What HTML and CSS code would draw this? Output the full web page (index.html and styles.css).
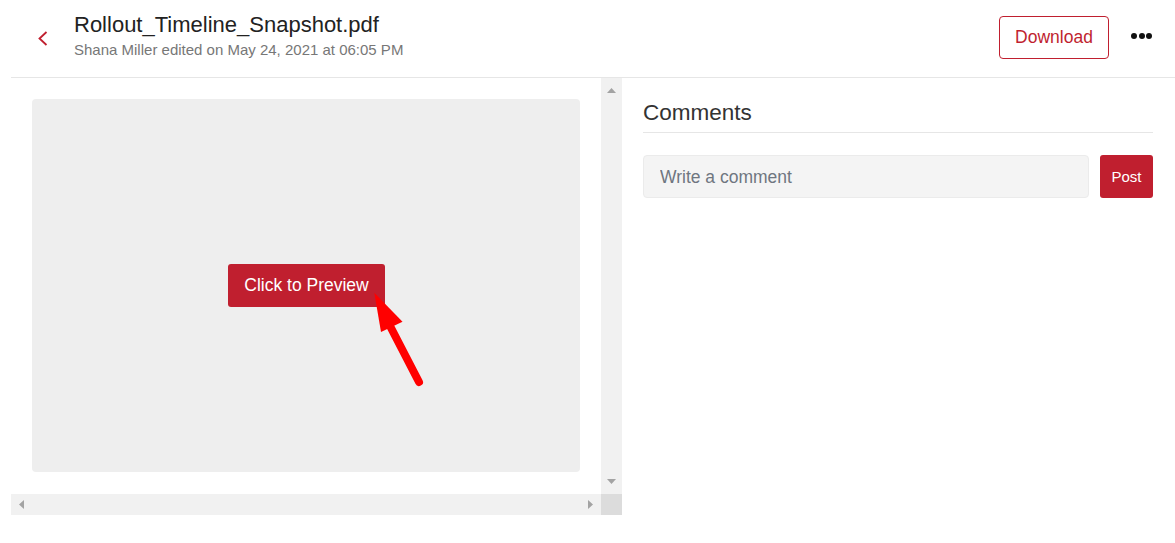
FILE: index.html
```html
<!DOCTYPE html>
<html lang="en">
<head>
<meta charset="utf-8">
<title>Rollout_Timeline_Snapshot.pdf</title>
<link rel="stylesheet" href="styles.css">
</head>
<body>
<header class="topbar">
  <a class="back" href="#" aria-label="Back">
    <svg width="10" height="15" viewBox="0 0 10 15"><path d="M8.5 1 L1.5 7.5 L8.5 14" fill="none" stroke="#c01f2f" stroke-width="1.8"/></svg>
  </a>
  <div class="file-info">
    <h1 class="file-title">Rollout_Timeline_Snapshot.pdf</h1>
    <div class="file-meta">Shana Miller edited on May 24, 2021 at 06:05 PM</div>
  </div>
  <div class="actions">
    <button class="btn-outline">Download</button>
    <button class="more" aria-label="More"><span></span><span></span><span></span></button>
  </div>
</header>
<main class="content">
  <section class="viewer">
    <div class="viewport">
      <div class="preview">
        <button class="btn-primary btn-preview">Click to Preview</button>
        <svg class="pointer" viewBox="0 0 548 373" width="548" height="373">
          <line x1="357" y1="225" x2="387" y2="283" stroke="#ff0000" stroke-width="8" stroke-linecap="round"/>
          <polygon points="342.3,193.7 370.5,222.7 349,233" fill="#ff0000"/>
        </svg>
      </div>
    </div>
    <div class="vscroll">
      <svg width="9" height="5" viewBox="0 0 9 5"><polygon points="4.5,0 9,5 0,5" fill="#a3a3a3"/></svg>
      <svg width="9" height="5" viewBox="0 0 9 5"><polygon points="0,0 9,0 4.5,5" fill="#a3a3a3"/></svg>
    </div>
    <div class="hscroll">
      <svg width="5" height="9" viewBox="0 0 5 9"><polygon points="5,0 5,9 0,4.5" fill="#a3a3a3"/></svg>
      <svg width="5" height="9" viewBox="0 0 5 9"><polygon points="0,0 5,4.5 0,9" fill="#a3a3a3"/></svg>
    </div>
    <div class="corner"></div>
  </section>
  <aside class="comments">
    <h2 class="comments-title">Comments</h2>
    <form class="comment-form">
      <input class="comment-input" type="text" placeholder="Write a comment">
      <button class="btn-primary btn-post" type="button">Post</button>
    </form>
  </aside>
</main>
</body>
</html>
```

FILE: styles.css
```css
* { box-sizing: border-box; }
html, body { margin: 0; padding: 0; background: #ffffff; }
body {
  font-family: "Liberation Sans", Arial, sans-serif;
  color: #222222;
  width: 1175px;
  height: 543px;
  overflow: hidden;
}
button { font-family: inherit; cursor: pointer; }

.topbar {
  margin-left: 11px;
  height: 78px;
  border-bottom: 1px solid #e6e6e6;
  display: flex;
  align-items: flex-start;
  padding: 0 23px 0 27px;
}
.back {
  display: block;
  margin-top: 31px;
  width: 10px;
  height: 15px;
}
.back svg { display: block; }
.file-info {
  margin-left: 26px;
  padding-top: 12px;
  flex: 1;
}
.file-title {
  margin: 0;
  font-size: 22px;
  font-weight: normal;
  line-height: 26px;
  color: #222222;
}
.file-meta {
  margin-top: 3px;
  font-size: 15px;
  line-height: 18px;
  color: #777777;
}
.actions {
  display: flex;
  align-items: center;
  margin-top: 16px;
  gap: 22px;
}
.btn-outline {
  height: 43px;
  width: 110px;
  padding: 0;
  border: 1px solid #c01f2f;
  border-radius: 4px;
  background: #ffffff;
  color: #c01f2f;
  font-size: 17.5px;
}
.more {
  display: flex;
  gap: 1.5px;
  padding: 0;
  border: 0;
  background: transparent;
  margin-top: -3px;
}
.more span {
  width: 6px;
  height: 6px;
  border-radius: 50%;
  background: #111111;
}

.content {
  display: flex;
  align-items: flex-start;
}
.viewer {
  margin-left: 11px;
  display: grid;
  grid-template-columns: 590px 21px;
  grid-template-rows: 416px 21px;
}
.viewport {
  padding: 21px 21px 22px 21px;
  background: #ffffff;
}
.preview {
  position: relative;
  height: 100%;
  background: #eeeeee;
  border-radius: 4px;
  display: flex;
  align-items: center;
  justify-content: center;
}
.pointer {
  position: absolute;
  left: 0;
  top: 0;
  pointer-events: none;
}
.btn-primary {
  border: 0;
  border-radius: 3px;
  background: #c01f2f;
  color: #ffffff;
}
.btn-preview {
  height: 43px;
  width: 157px;
  padding: 0;
  font-size: 17.5px;
  margin-left: 1px;
}
.vscroll {
  background: #f1f1f1;
  display: flex;
  flex-direction: column;
  justify-content: space-between;
  align-items: center;
  padding: 10px 0;
}
.hscroll {
  background: #f1f1f1;
  display: flex;
  justify-content: space-between;
  align-items: center;
  padding: 0 8px;
}
.vscroll svg, .hscroll svg { display: block; }
.corner { background: #dcdcdc; }

.comments {
  margin-left: 21px;
  width: 510px;
}
.comments-title {
  margin: 21px 0 0 0;
  font-size: 22.5px;
  font-weight: normal;
  line-height: 27px;
  color: #333333;
  padding-bottom: 6px;
  border-bottom: 1px solid #e6e6e6;
}
.comment-form {
  margin-top: 22px;
  display: flex;
  gap: 11px;
}
.comment-input {
  width: 446px;
  height: 43px;
  border: 1px solid #ebebeb;
  border-radius: 4px;
  background: #f4f4f4;
  padding: 1px 16px 0 16px;
  font-family: inherit;
  font-size: 17.5px;
  color: #333333;
  outline: none;
}
.comment-input::placeholder { color: #6f7680; }
.btn-post {
  width: 53px;
  height: 43px;
  padding: 0;
  font-size: 15px;
}
```
